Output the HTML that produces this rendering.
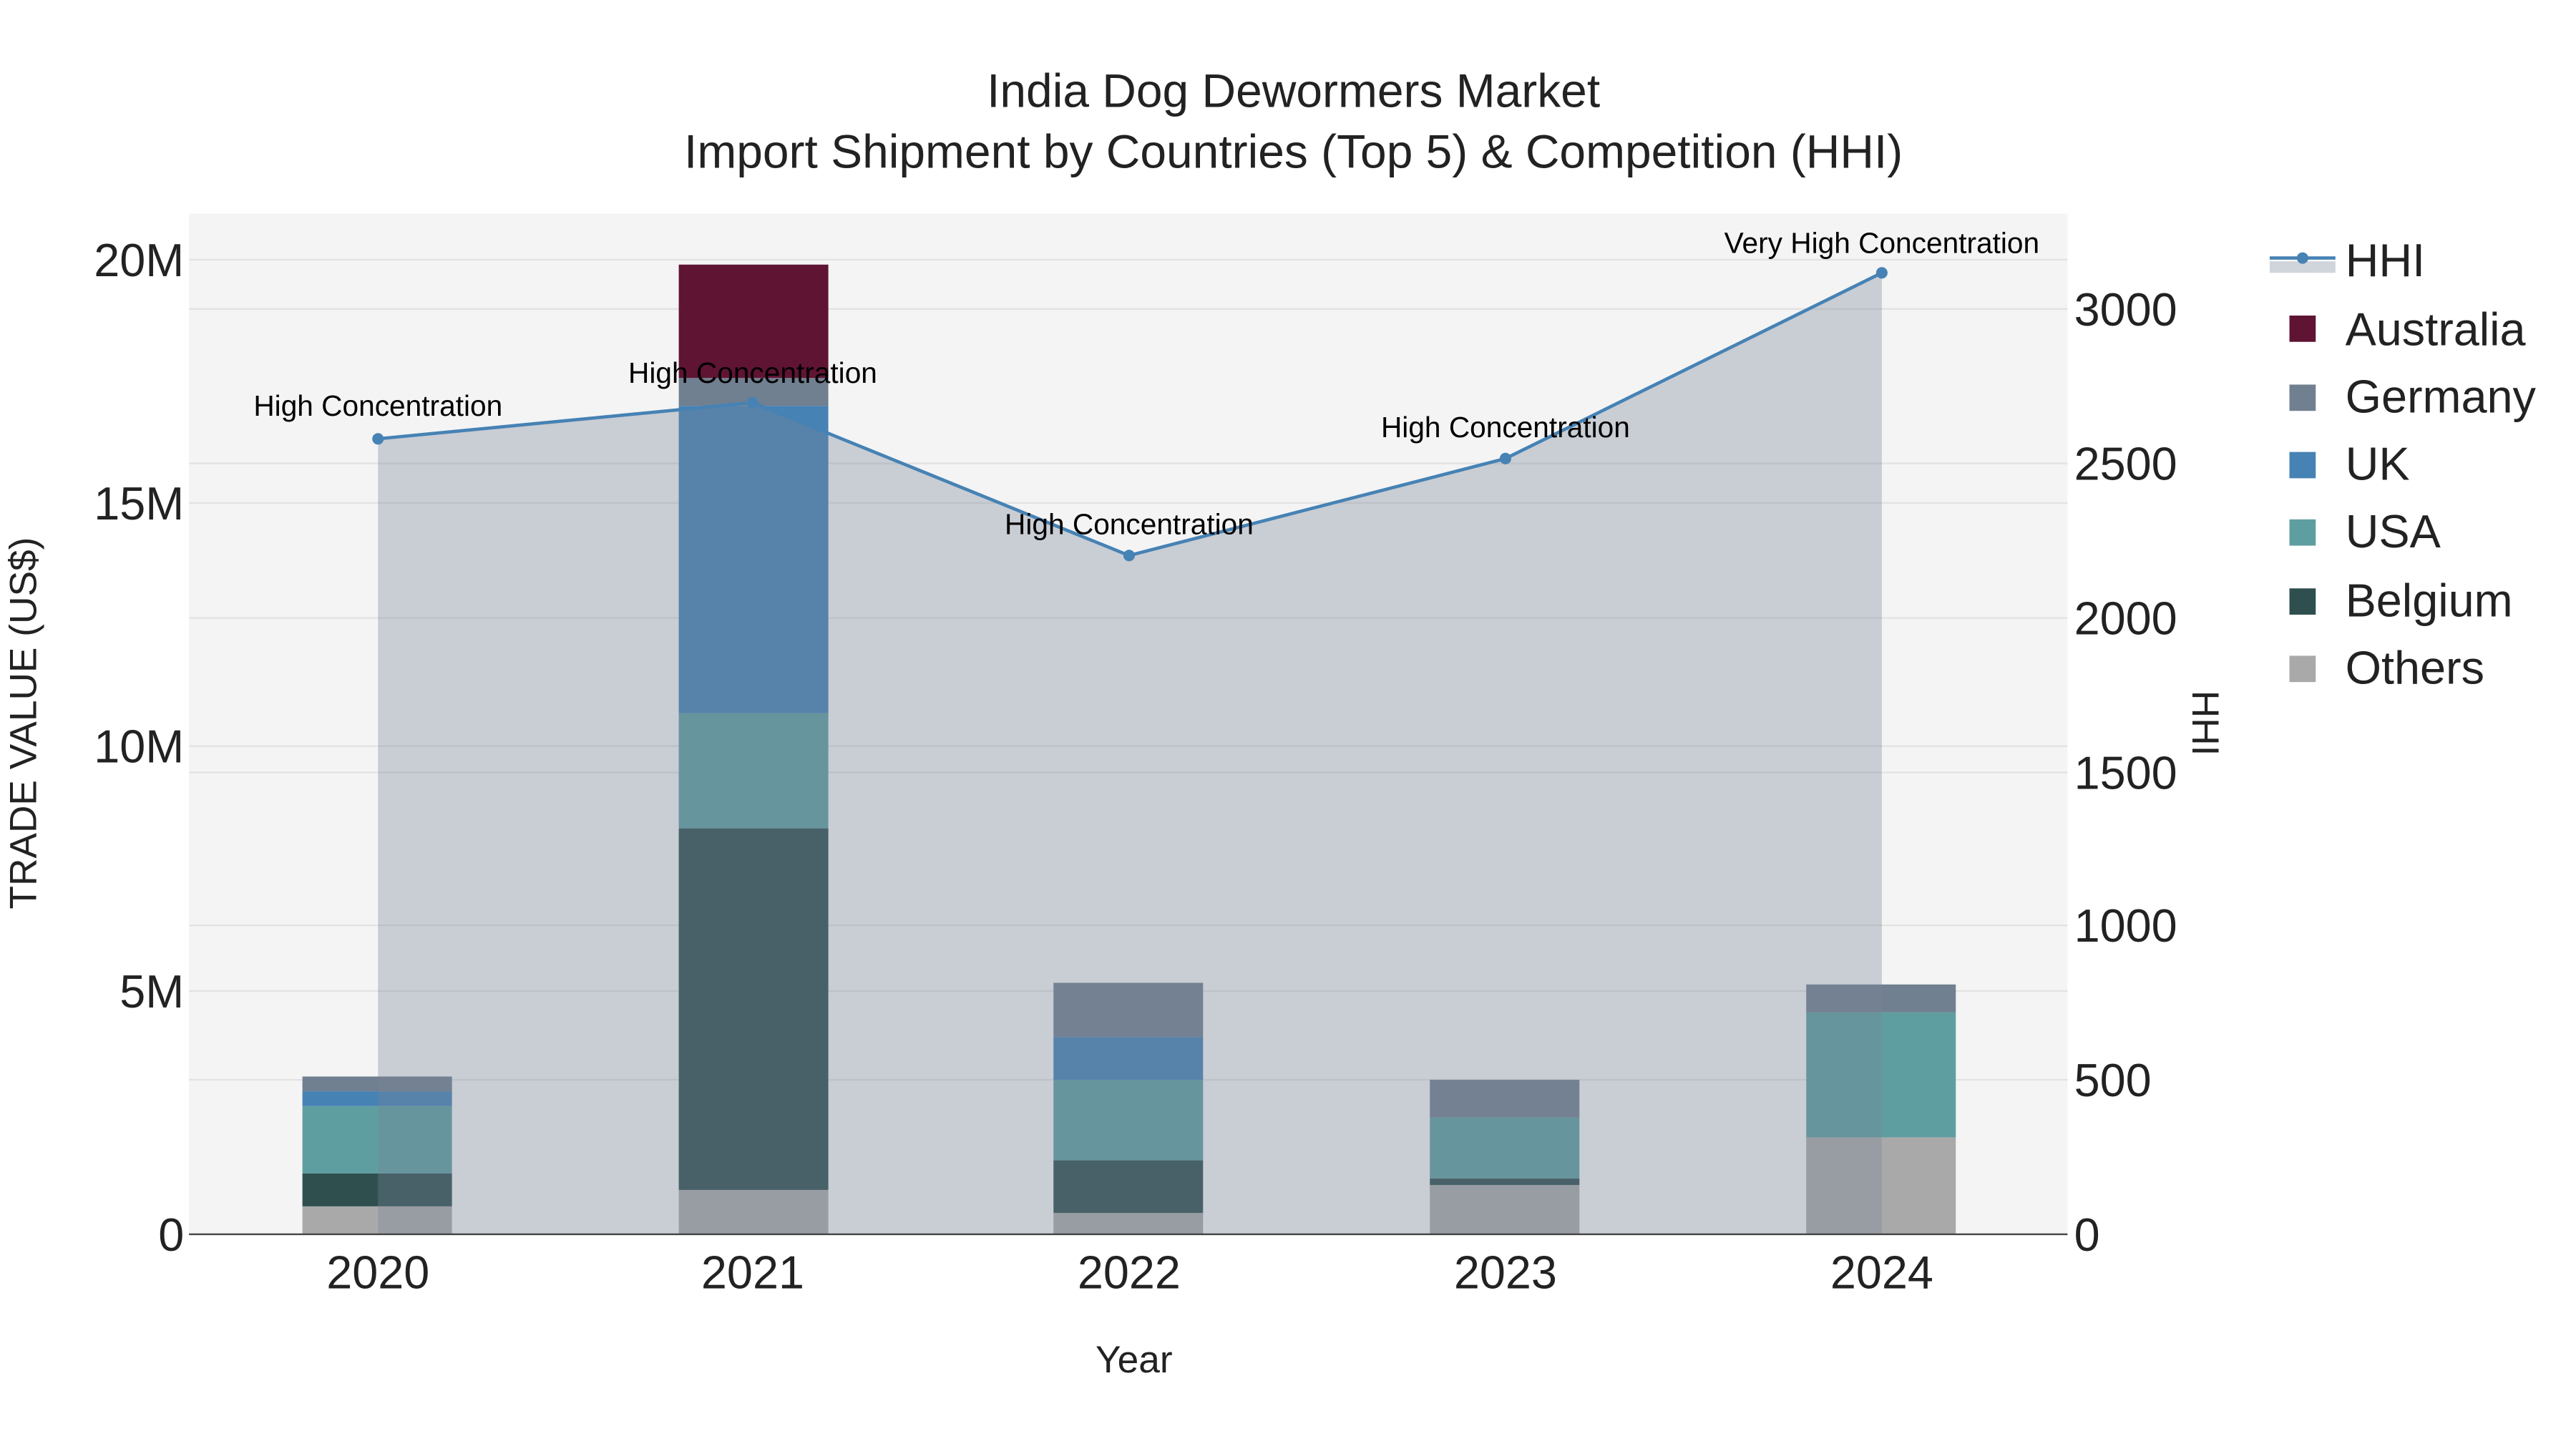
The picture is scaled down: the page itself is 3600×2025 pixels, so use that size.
<!DOCTYPE html>
<html><head><meta charset="utf-8"><style>html,body{margin:0;padding:0;background:#fff}svg{display:block}text{font-family:"Liberation Sans",Arial,sans-serif}</style></head><body>
<svg width="3600" height="2025" viewBox="0 0 1560 877.5" xmlns="http://www.w3.org/2000/svg">
<rect width="1560" height="877.5" fill="#fff"/>
<g transform="scale(0.9953)">
<rect x="115" y="130" width="1143" height="621" fill="#f4f4f4"/>
<g stroke="#e2e2e2" stroke-width="1">
<line x1="115" x2="1258" y1="158" y2="158"/><line x1="115" x2="1258" y1="306" y2="306"/><line x1="115" x2="1258" y1="454" y2="454"/><line x1="115" x2="1258" y1="603" y2="603"/>
<line x1="115" x2="1258" y1="657" y2="657"/><line x1="115" x2="1258" y1="563" y2="563"/><line x1="115" x2="1258" y1="470" y2="470"/><line x1="115" x2="1258" y1="376" y2="376"/><line x1="115" x2="1258" y1="282" y2="282"/><line x1="115" x2="1258" y1="188" y2="188"/>
</g>
<g>
<rect x="184" y="734" width="91" height="17" fill="#a9a9a9"/>
<rect x="184" y="714" width="91" height="20" fill="#2f4f4f"/>
<rect x="184" y="673" width="91" height="41" fill="#5f9ea0"/>
<rect x="184" y="664" width="91" height="9" fill="#4682b4"/>
<rect x="184" y="655" width="91" height="9" fill="#708090"/>

<rect x="413" y="724" width="91" height="27" fill="#a9a9a9"/>
<rect x="413" y="504" width="91" height="220" fill="#2f4f4f"/>
<rect x="413" y="434" width="91" height="70" fill="#5f9ea0"/>
<rect x="413" y="247" width="91" height="187" fill="#4682b4"/>
<rect x="413" y="230" width="91" height="17" fill="#708090"/>
<rect x="413" y="161" width="91" height="69" fill="#5f1434"/>

<rect x="641" y="738" width="91" height="13" fill="#a9a9a9"/>
<rect x="641" y="706" width="91" height="32" fill="#2f4f4f"/>
<rect x="641" y="657" width="91" height="49" fill="#5f9ea0"/>
<rect x="641" y="631" width="91" height="26" fill="#4682b4"/>
<rect x="641" y="598" width="91" height="33" fill="#708090"/>

<rect x="870" y="721" width="91" height="30" fill="#a9a9a9"/>
<rect x="870" y="717" width="91" height="4" fill="#2f4f4f"/>
<rect x="870" y="680" width="91" height="37" fill="#5f9ea0"/>
<rect x="870" y="657" width="91" height="23" fill="#708090"/>

<rect x="1099" y="692" width="91" height="59" fill="#a9a9a9"/>
<rect x="1099" y="616" width="91" height="76" fill="#5f9ea0"/>
<rect x="1099" y="599" width="91" height="17" fill="#708090"/>
</g>
<path d="M230,267 L458,245 L687,338 L916,279 L1145,166 L1145,751 L230,751 Z" fill="rgb(121,132,153)" fill-opacity="0.35"/>
<polyline points="230,267 458,245 687,338 916,279 1145,166" fill="none" stroke="#4682b4" stroke-width="2"/>
<g fill="#4682b4"><circle cx="230" cy="267" r="3.5"/><circle cx="458" cy="245" r="3.5"/><circle cx="687" cy="338" r="3.5"/><circle cx="916" cy="279" r="3.5"/><circle cx="1145" cy="166" r="3.5"/></g>
<line x1="115" x2="1258" y1="751" y2="751" stroke="#444" stroke-width="1"/>
<g font-size="17.7" fill="#000" text-anchor="middle">
<text x="230" y="253">High Concentration</text>
<text x="458" y="233">High Concentration</text>
<text x="687" y="325">High Concentration</text>
<text x="916" y="266">High Concentration</text>
<text x="1145" y="154">Very High Concentration</text>
</g>
<g font-size="28.7" fill="#222" text-anchor="middle">
<text x="787" y="65">India Dog Dewormers Market</text>
<text x="787" y="102">Import Shipment by Countries (Top 5) &amp; Competition (HHI)</text>
</g>
<g font-size="28.2" fill="#222" text-anchor="end">
<text x="112" y="168">20M</text><text x="112" y="316">15M</text><text x="112" y="464">10M</text><text x="112" y="613">5M</text><text x="112" y="761">0</text>
</g>
<g font-size="28.2" fill="#222" text-anchor="start">
<text x="1262" y="198">3000</text><text x="1262" y="292">2500</text><text x="1262" y="386">2000</text><text x="1262" y="480">1500</text><text x="1262" y="573">1000</text><text x="1262" y="667">500</text><text x="1262" y="761">0</text>
</g>
<g font-size="28.2" fill="#222" text-anchor="middle">
<text x="230" y="784">2020</text><text x="458" y="784">2021</text><text x="687" y="784">2022</text><text x="916" y="784">2023</text><text x="1145" y="784">2024</text>
</g>
<text x="690" y="835" font-size="23.2" fill="#222" text-anchor="middle">Year</text>
<text transform="translate(22,440) rotate(-90)" font-size="23.2" fill="#222" text-anchor="middle">TRADE VALUE (US$)</text>
<text transform="translate(1334,440) rotate(90)" font-size="23.2" fill="#222" text-anchor="middle">HHI</text>
<g font-size="28.2" fill="#222">
<rect x="1381" y="159" width="40" height="7" fill="rgb(121,132,153)" fill-opacity="0.35"/>
<line x1="1381" x2="1421" y1="157" y2="157" stroke="#4682b4" stroke-width="2"/><circle cx="1401" cy="157" r="3.5" fill="#4682b4"/>
<text x="1427" y="168">HHI</text>
<rect x="1393" y="192" width="16" height="16" fill="#5f1434"/><text x="1427" y="210">Australia</text>
<rect x="1393" y="234" width="16" height="16" fill="#708090"/><text x="1427" y="251">Germany</text>
<rect x="1393" y="275" width="16" height="16" fill="#4682b4"/><text x="1427" y="292">UK</text>
<rect x="1393" y="316" width="16" height="16" fill="#5f9ea0"/><text x="1427" y="333">USA</text>
<rect x="1393" y="358" width="16" height="16" fill="#2f4f4f"/><text x="1427" y="375">Belgium</text>
<rect x="1393" y="399" width="16" height="16" fill="#a9a9a9"/><text x="1427" y="416">Others</text>
</g>
</g>
</svg>
</body></html>
